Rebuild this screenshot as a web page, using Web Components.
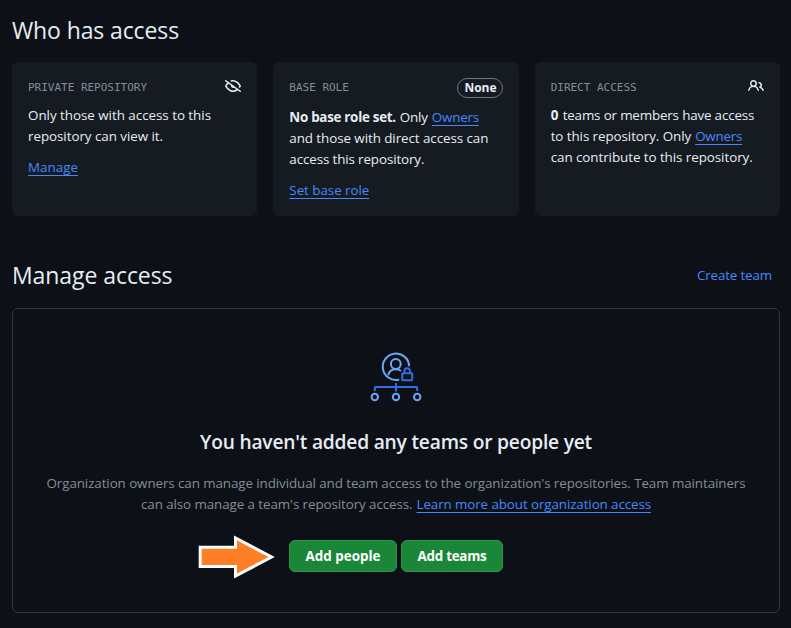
<!DOCTYPE html>
<html lang="en">
<head>
<meta charset="utf-8">
<title>Who has access</title>
<style>
html,body{margin:0;background:#0d1117;overflow:hidden}
body{font:13.4px/21px "Open Sans","Noto Sans",sans-serif;color:#e6edf3;width:791px;height:628px}
</style>
</head>
<body>
<access-page></access-page>
<script>
const define = (name, html, setup) => {
  const tpl = document.createElement('template');
  tpl.innerHTML = html;
  customElements.define(name, class extends HTMLElement {
    connectedCallback() {
      if (this.shadowRoot) return;
      this.attachShadow({mode: 'open'}).append(tpl.content.cloneNode(true));
      if (setup) setup(this);
    }
  });
};

define('text-link', `<style>
:host{display:inline;color:#4589fa;--line:underline}
:host([plain]){--line:none}
</style><slot></slot>`);

/* A run of text tracked to an exact measure, given by the "w" attribute. */
define('text-run', `<style>
:host{display:inline-block;white-space:pre;text-decoration:var(--line,none);text-decoration-thickness:1px;text-underline-offset:3px;text-decoration-skip-ink:none}
</style><slot></slot>`, el => {
  const target = parseFloat(el.getAttribute('w'));
  const natural = el.getBoundingClientRect().width;
  el.style.letterSpacing = ((target - natural) / el.textContent.length).toFixed(4) + 'px';
  el.style.width = target + 'px';
});

define('line-row', `<style>
:host{display:flex;height:21px;white-space:pre;gap:4px}
:host([center]){justify-content:center}
</style><slot></slot>`);

const icons = {
  'eye-closed': 'M.143 2.31a.75.75 0 0 1 1.047-.167l14.5 10.5a.75.75 0 1 1-.88 1.214l-2.248-1.628C11.346 13.19 9.792 14 8 14c-1.981 0-3.67-.992-4.933-2.078C1.797 10.832.88 9.577.43 8.9a1.619 1.619 0 0 1 0-1.797c.353-.533.995-1.42 1.868-2.305L.31 3.357A.75.75 0 0 1 .143 2.31Zm1.536 5.622A.12.12 0 0 0 1.657 8c0 .021.006.045.022.068.412.621 1.242 1.75 2.366 2.717C5.175 11.758 6.527 12.5 8 12.5c1.195 0 2.31-.488 3.29-1.191L9.063 9.695A2 2 0 0 1 6.058 7.52L3.529 5.688a14.207 14.207 0 0 0-1.85 2.244ZM8 3.5c-.516 0-1.017.09-1.499.251a.75.75 0 1 1-.473-1.423A6.207 6.207 0 0 1 8 2c1.981 0 3.67.992 4.933 2.078 1.27 1.091 2.187 2.345 2.637 3.023a1.62 1.62 0 0 1 0 1.798c-.11.166-.248.365-.41.587a.75.75 0 1 1-1.21-.887c.148-.201.272-.382.371-.53a.119.119 0 0 0 0-.137c-.412-.621-1.242-1.75-2.366-2.717C10.825 4.242 9.473 3.5 8 3.5Z',
  'people': 'M2 5.5a3.5 3.5 0 1 1 5.898 2.549 5.508 5.508 0 0 1 3.034 4.084.75.75 0 1 1-1.482.235 4 4 0 0 0-7.9 0 .75.75 0 0 1-1.482-.236A5.507 5.507 0 0 1 3.102 8.05 3.493 3.493 0 0 1 2 5.5ZM11 4a3.001 3.001 0 0 1 2.22 5.018 5.01 5.01 0 0 1 2.56 3.012.749.749 0 0 1-.885.954.752.752 0 0 1-.549-.514 3.507 3.507 0 0 0-2.522-2.372.75.75 0 0 1-.574-.73v-.352a.75.75 0 0 1 .416-.672A1.5 1.5 0 0 0 11 5.5.75.75 0 0 1 11 4Zm-5.5-.5a2 2 0 1 0-.001 3.999A2 2 0 0 0 5.5 3.5Z'
};
define('oct-icon', `<style>
:host{display:block;width:16px;height:16px}svg{display:block;fill:#e6edf3}
</style><svg width="16" height="16" viewBox="0 0 16 16"><path/></svg>`,
  el => el.shadowRoot.querySelector('path').setAttribute('d', icons[el.getAttribute('name')]));

define('role-badge', `<style>
:host{display:flex;box-sizing:border-box;width:46px;height:20px;border:1px solid #6e7681;border-radius:10px;align-items:center;justify-content:center;font-size:12px;font-weight:700;line-height:20px}
</style><text-run w="30.5"><slot></slot></text-run>`);

define('access-card', `<style>
:host{display:flex;flex-direction:column;box-sizing:border-box;background:#161b22;border-radius:6px;padding:16px;height:154px}
header{display:flex;justify-content:space-between;align-items:flex-start;margin-bottom:11px;height:var(--head,16px)}
h3{margin:0;font:400 11px/20px "DejaVu Sans Mono",monospace;color:#848d97}
slot[name=action]{display:block}
footer{margin-top:10px}
</style>
<header><h3><slot name="label"></slot></h3><slot name="mark"></slot></header>
<slot></slot><footer><slot name="action"></slot></footer>`);

define('access-illustration', `<style>
:host{display:block;width:56px;height:56px}svg{display:block}
</style>
<svg width="56" height="56" viewBox="368 350 56 56" fill="none" stroke="#6ea6f7" stroke-width="2" stroke-linecap="round">
<path d="M409.1 365.4A13.2 13.2 0 1 0 398.4 379.7"/>
<circle cx="395.8" cy="364" r="4.9"/>
<path d="M388.4 374.6c.8-3.4 3.8-5.3 7.4-5.3 2 0 3.4.5 4.5 1.2"/>
<g stroke="#2f6fe4"><rect x="402.2" y="373.2" width="10" height="7" rx=".6" stroke-linejoin="round"/>
<path d="M404.4 373v-2a2.8 2.8 0 0 1 5.6 0v2"/>
<path d="M396 383.8v7M374.8 390.3v-2.6q0-.7.7-.7h41q.7 0 .7.7v2.6"/></g>
<circle cx="374.8" cy="397" r="3.2"/><circle cx="396" cy="397" r="3.2"/><circle cx="417.2" cy="397" r="3.2"/>
</svg>`);

define('action-button', `<style>
:host{display:block}
button{display:flex;align-items:center;justify-content:center;width:100%;height:32px;padding:0;margin:0;box-sizing:border-box;border:1px solid #329149;border-radius:6px;background:#1a8738;color:#fff;font:700 13.4px/20px "Open Sans",sans-serif}
</style><button><slot></slot></button>`);

define('pointer-arrow', `<style>
:host{display:block;position:absolute;left:-92px;top:-6px}svg{display:block}
</style><svg width="78" height="46" viewBox="197 534 78 46"><path d="M200.2 547.2H235.5V538L271.6 557L235.5 576V566.6H200.2Z" fill="#ff7f27" stroke="#fff" stroke-width="3"/></svg>`);

define('section-head', `<style>
:host{display:flex;justify-content:space-between;align-items:center;height:36px;padding-right:8px}
h2{margin:0;font-size:23px;font-weight:400;line-height:36px}
</style><h2><slot></slot></h2><slot name="side"></slot>`);

define('empty-state', `<style>
:host{display:flex;flex-direction:column;align-items:center;box-sizing:border-box;height:305px;border:1px solid #30363d;border-radius:6px;padding-top:41px}
h3{margin:21px 0 16px;font-size:19.2px;font-weight:600;line-height:30px}
.copy{color:#848d97}
.actions{position:relative;display:grid;grid-template-columns:108px 102px;gap:4px;margin-top:25px}
</style>
<access-illustration></access-illustration>
<h3><text-run w="392">You haven't added any teams or people yet</text-run></h3>
<div class="copy"><line-row center><text-run w="699">Organization owners can manage individual and team access to the organization's repositories. Team maintainers</text-run></line-row>
<line-row center><text-run w="271.5">can also manage a team's repository access.</text-run><text-link><text-run w="234.5">Learn more about organization access</text-run></text-link></line-row></div>
<div class="actions"><pointer-arrow></pointer-arrow>
<action-button><text-run w="75">Add people</text-run></action-button>
<action-button><text-run w="69">Add teams</text-run></action-button></div>`);

define('access-page', `<style>
:host{display:block;padding:12px 11px 0 12px}
.cards{display:grid;grid-template-columns:repeat(3,1fr);gap:16px;margin:14px 0 41px}
section-head + empty-state{margin-top:15px}
b{font-weight:700}
</style>
<section-head><text-run w="167">Who has access</text-run></section-head>
<div class="cards">
<access-card><text-run w="119" slot="label">PRIVATE REPOSITORY</text-run><oct-icon slot="mark" name="eye-closed"></oct-icon>
<line-row><text-run w="183">Only those with access to this</text-run></line-row>
<line-row><text-run w="135">repository can view it.</text-run></line-row>
<text-link slot="action"><text-run w="50">Manage</text-run></text-link></access-card>
<access-card style="--head:18px"><text-run w="59.5" slot="label">BASE ROLE</text-run><role-badge slot="mark">None</role-badge>
<line-row><b><text-run w="106.5">No base role set.</text-run></b><text-run w="28">Only</text-run><text-link><text-run w="47">Owners</text-run></text-link></line-row>
<line-row><text-run w="199">and those with direct access can</text-run></line-row>
<line-row><text-run w="135">access this repository.</text-run></line-row>
<text-link slot="action"><text-run w="80">Set base role</text-run></text-link></access-card>
<access-card><text-run w="86" slot="label">DIRECT ACCESS</text-run><oct-icon slot="mark" name="people"></oct-icon>
<line-row><b><text-run w="8">0</text-run></b><text-run w="191.5">teams or members have access</text-run></line-row>
<line-row><text-run w="140.5">to this repository. Only</text-run><text-link><text-run w="47">Owners</text-run></text-link></line-row>
<line-row><text-run w="202">can contribute to this repository.</text-run></line-row></access-card>
</div>
<section-head><text-run w="160.5">Manage access</text-run><text-link plain slot="side"><text-run w="75">Create team</text-run></text-link></section-head>
<empty-state></empty-state>`);
</script>
</body>
</html>
